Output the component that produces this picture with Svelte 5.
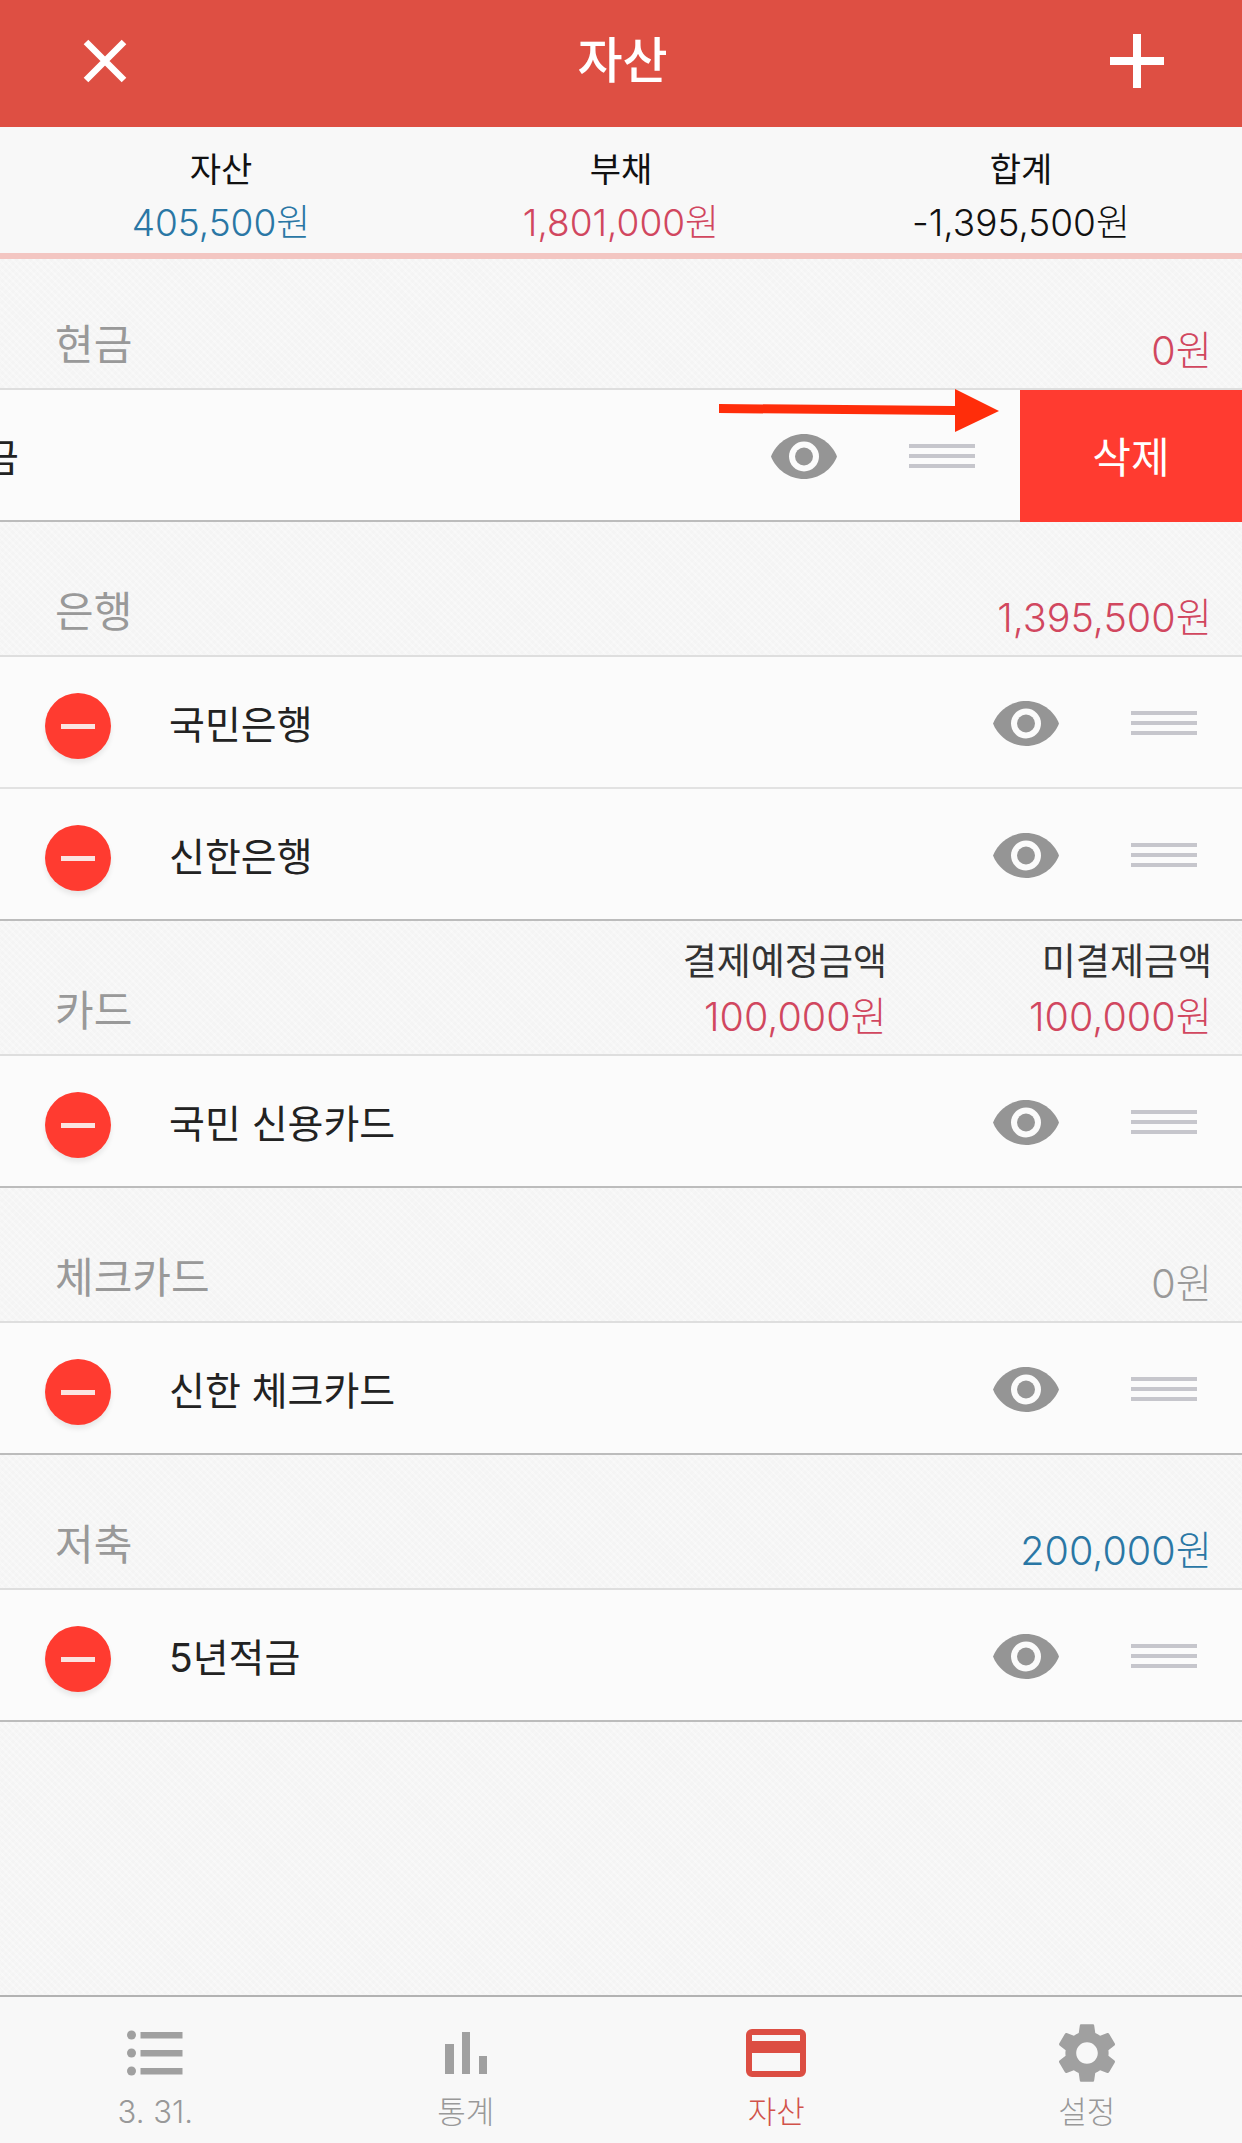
<script lang="ts">
	const summary = [
		{ label: '자산', value: '405,500원', tone: 'blue' },
		{ label: '부채', value: '1,801,000원', tone: 'red' },
		{ label: '합계', value: '-1,395,500원', tone: 'black' }
	];

	const sections = [
		{ title: '현금', amount: '0원', tone: 'red', swiped: true, rows: ['현금'] },
		{ title: '은행', amount: '1,395,500원', tone: 'red', rows: ['국민은행', '신한은행'] },
		{
			title: '카드',
			columns: [
				{ label: '결제예정금액', amount: '100,000원' },
				{ label: '미결제금액', amount: '100,000원' }
			],
			rows: ['국민 신용카드']
		},
		{ title: '체크카드', amount: '0원', tone: 'gray', rows: ['신한 체크카드'] },
		{ title: '저축', amount: '200,000원', tone: 'blue', rows: ['5년적금'] }
	];

	const tabs = [
		{ id: 'list', label: '3. 31.' },
		{ id: 'stats', label: '통계' },
		{ id: 'card', label: '자산', active: true },
		{ id: 'gear', label: '설정' }
	];
</script>

<div class="page">
	<header class="topbar">
		<button class="icon-btn close" aria-label="닫기">
			<svg width="48" height="48" viewBox="0 0 48 48">
				<path d="M5 5 L43 43 M43 5 L5 43" stroke="#fff" stroke-width="6.5" fill="none" />
			</svg>
		</button>
		<h1>자산</h1>
		<button class="icon-btn add" aria-label="추가">
			<svg width="54" height="54" viewBox="0 0 54 54">
				<path d="M27 0 V54 M0 27 H54" stroke="#fff" stroke-width="8" fill="none" />
			</svg>
		</button>
	</header>

	<div class="summary">
		{#each summary as item}
			<div class="summary-item">
				<div class="summary-label">{item.label}</div>
				<div class="money {item.tone}">{item.value}</div>
			</div>
		{/each}
	</div>

	<main class="content">
		{#each sections as section, i}
			<section>
				<div class="section-head" class:first={i === 0}>
					<div class="section-title">{section.title}</div>
					{#if section.columns}
						<div class="columns">
							{#each section.columns as col}
								<div class="column">
									<div class="column-label">{col.label}</div>
									<div class="money red">{col.amount}</div>
								</div>
							{/each}
						</div>
					{:else}
						<div class="money {section.tone}">{section.amount}</div>
					{/if}
				</div>

				{#each section.rows as name, r}
					<div class="row">
						<div class="row-main" class:swiped={section.swiped} class:last={r === section.rows.length - 1}>
							<span class="minus"><span class="minus-bar"></span></span>
							<span class="row-name">{name}</span>
							<svg class="eye" width="66" height="45" viewBox="1 4.5 22 15">
								<path d="M12 4.5C7 4.5 2.73 7.61 1 12c1.73 4.39 6 7.5 11 7.5s9.27-3.11 11-7.5c-1.73-4.39-6-7.5-11-7.5z" fill="#959595" />
								<circle cx="12" cy="12" r="5" fill="#fbfbfb" />
								<circle cx="12" cy="12" r="3" fill="#959595" />
							</svg>
							<span class="handle"><i></i><i></i><i></i></span>
						</div>
						{#if section.swiped}
							<button class="delete">삭제</button>
						{/if}
					</div>
				{/each}
			</section>
		{/each}

		<svg class="arrow" width="282" height="46" viewBox="0 0 282 46">
			<path d="M0 15 L236 17 V0 L280 22 L236 43 V26 L0 24 Z" fill="#ff2d0a" />
		</svg>
	</main>

	<nav class="tabbar">
		{#each tabs as tab}
			<div class="tab" class:active={tab.active}>
				<div class="tab-icon">
					{#if tab.id === 'list'}
						<svg width="56" height="48" viewBox="0 0 56 48" fill="#a0a0a0">
							<circle cx="4.5" cy="6" r="4.5" />
							<circle cx="4.5" cy="24" r="4.5" />
							<circle cx="4.5" cy="42" r="4.5" />
							<rect x="13.5" y="3" width="42" height="6.5" />
							<rect x="13.5" y="21" width="42" height="6.5" />
							<rect x="13.5" y="39" width="42" height="6.5" />
						</svg>
					{:else if tab.id === 'stats'}
						<svg width="42" height="42" viewBox="0 0 42 42" fill="#a0a0a0">
							<rect x="0" y="12" width="9" height="30" />
							<rect x="17" y="0" width="8" height="42" />
							<rect x="34" y="24" width="8" height="18" />
						</svg>
					{:else if tab.id === 'card'}
						<svg width="60" height="48" viewBox="0 0 60 48">
							<path fill="#dc4e43" fill-rule="evenodd" d="M6 0 H54 A6 6 0 0 1 60 6 V42 A6 6 0 0 1 54 48 H6 A6 6 0 0 1 0 42 V6 A6 6 0 0 1 6 0 Z M6 6 V12 H54 V6 Z M6 24 V42 H54 V24 Z" />
						</svg>
					{:else}
						<svg width="72" height="72" viewBox="0 0 24 24" fill="#a0a0a0">
							<path d="M19.14 12.94c.04-.3.06-.61.06-.94 0-.32-.02-.64-.07-.94l2.03-1.58c.18-.14.23-.41.12-.61l-1.92-3.32c-.12-.22-.37-.29-.59-.22l-2.39.96c-.5-.38-1.03-.7-1.62-.94l-.36-2.54c-.04-.24-.24-.41-.48-.41h-3.84c-.24 0-.43.17-.47.41l-.36 2.54c-.59.24-1.13.57-1.62.94l-2.39-.96c-.22-.08-.47 0-.59.22L2.74 8.87c-.12.21-.08.47.12.61l2.03 1.58c-.05.3-.09.63-.09.94s.02.64.07.94l-2.03 1.58c-.18.14-.23.41-.12.61l1.92 3.32c.12.22.37.29.59.22l2.39-.96c.5.38 1.03.7 1.62.94l.36 2.54c.05.24.24.41.48.41h3.84c.24 0 .44-.17.47-.41l.36-2.54c.59-.24 1.13-.56 1.62-.94l2.39.96c.22.08.47 0 .59-.22l1.92-3.32c.12-.22.07-.47-.12-.61l-2.01-1.58zM12 15.6c-1.98 0-3.6-1.62-3.6-3.6s1.62-3.6 3.6-3.6 3.6 1.62 3.6 3.6-1.62 3.6-3.6 3.6z" />
						</svg>
					{/if}
				</div>
				<div class="tab-label">{tab.label}</div>
			</div>
		{/each}
	</nav>
</div>

<style>
	:global(body) {
		margin: 0;
		font-family: Inter, 'Noto Sans CJK KR', sans-serif;
	}

	.page {
		display: flex;
		flex-direction: column;
		width: 1242px;
		height: 2143px;
		overflow: hidden;
	}

	.topbar {
		display: grid;
		grid-template-columns: 1fr auto 1fr;
		align-items: center;
		height: 127px;
		padding: 0 78px 5px 81px;
		box-sizing: border-box;
		flex: none;
		background: #de4f43;
	}

	.topbar h1 {
		margin: 0;
		font-size: 49px;
		font-weight: 500;
		line-height: 60px;
		color: #fff;
	}

	.icon-btn {
		display: flex;
		padding: 0;
		border: none;
		background: none;
	}

	.add {
		justify-self: end;
	}

	.summary {
		display: grid;
		grid-template-columns: repeat(3, 1fr);
		flex: none;
		height: 132px;
		padding: 21px 21px 0;
		box-sizing: border-box;
		background: #f8f8f8;
		border-bottom: 6px solid #f3c6c2;
	}

	.summary-item {
		text-align: center;
	}

	.summary-label {
		font-size: 34px;
		line-height: 44px;
		color: #111;
	}

	.summary-item .money {
		margin-top: 9px;
		font-size: 37px;
	}

	.money {
		font-size: 39.5px;
		font-weight: 300;
		line-height: 44px;
		white-space: nowrap;
	}

	.blue {
		color: #2a77a5;
	}

	.red {
		color: #d1475f;
	}

	.black {
		color: #111;
	}

	.gray {
		color: #999;
	}

	.content {
		position: relative;
		flex: 1;
		background-color: #f4f4f4;
		background-image:
			repeating-linear-gradient(45deg, rgba(255, 255, 255, 0.3) 0 2px, transparent 2px 5px),
			repeating-linear-gradient(-45deg, rgba(255, 255, 255, 0.2) 0 2px, transparent 2px 5px);
	}

	.section-head {
		display: flex;
		justify-content: space-between;
		align-items: flex-end;
		height: 135px;
		padding: 0 30px 15px 55px;
		box-sizing: border-box;
		border-bottom: 2px solid #dedede;
	}

	.section-head.first {
		height: 131px;
	}

	.section-title {
		margin-bottom: 4px;
		font-size: 42px;
		line-height: 48px;
		color: #999;
	}

	.columns {
		display: flex;
		gap: 142px;
	}

	.column {
		text-align: right;
	}

	.column-label {
		margin-bottom: 11px;
		font-size: 37px;
		line-height: 44px;
		color: #333;
		white-space: nowrap;
	}

	.row {
		display: flex;
		height: 132px;
		overflow: hidden;
	}

	.row-main {
		display: flex;
		align-items: center;
		flex: none;
		width: 1242px;
		padding: 2px 45px 0;
		box-sizing: border-box;
		background: #fbfbfb;
		border-bottom: 2px solid #e2e2e2;
	}

	.row-main.last {
		border-bottom-color: #bcbcbc;
	}

	.row-main.swiped {
		margin-left: -222px;
	}

	.minus {
		display: flex;
		align-items: center;
		justify-content: center;
		flex: none;
		width: 66px;
		height: 66px;
		margin-top: 6px;
		border-radius: 50%;
		background: #ff3b30;
		box-shadow: 0 4px 5px rgba(0, 0, 0, 0.08);
	}

	.minus-bar {
		display: block;
		width: 34px;
		height: 5px;
		background: #fbe4e1;
	}

	.row-name {
		flex: 1;
		margin: -3px 0 0 58px;
		font-size: 39px;
		color: #222;
		white-space: nowrap;
	}

	.eye {
		flex: none;
	}

	.handle {
		display: flex;
		flex-direction: column;
		gap: 6px;
		flex: none;
		width: 66px;
		margin-left: 72px;
	}

	.handle i {
		display: block;
		height: 4px;
		background: #c6c6cc;
	}

	.delete {
		flex: none;
		width: 222px;
		padding: 0 0 4px;
		border: none;
		background: #ff3b30;
		color: #fff;
		font-family: inherit;
		font-size: 42px;
	}

	.arrow {
		position: absolute;
		left: 719px;
		top: 130px;
	}

	.tabbar {
		display: grid;
		grid-template-columns: repeat(4, 1fr);
		flex: none;
		height: 148px;
		padding-top: 20px;
		box-sizing: border-box;
		background: #f8f8f8;
		border-top: 2px solid #b2b2b2;
	}

	.tab {
		display: flex;
		flex-direction: column;
		align-items: center;
	}

	.tab-icon {
		display: flex;
		align-items: center;
		justify-content: center;
		height: 72px;
	}

	.tab-label {
		margin-top: 3px;
		font-size: 31px;
		font-weight: 300;
		line-height: 40px;
		color: #999;
	}

	.tab.active .tab-label {
		color: #d1524a;
	}
</style>
